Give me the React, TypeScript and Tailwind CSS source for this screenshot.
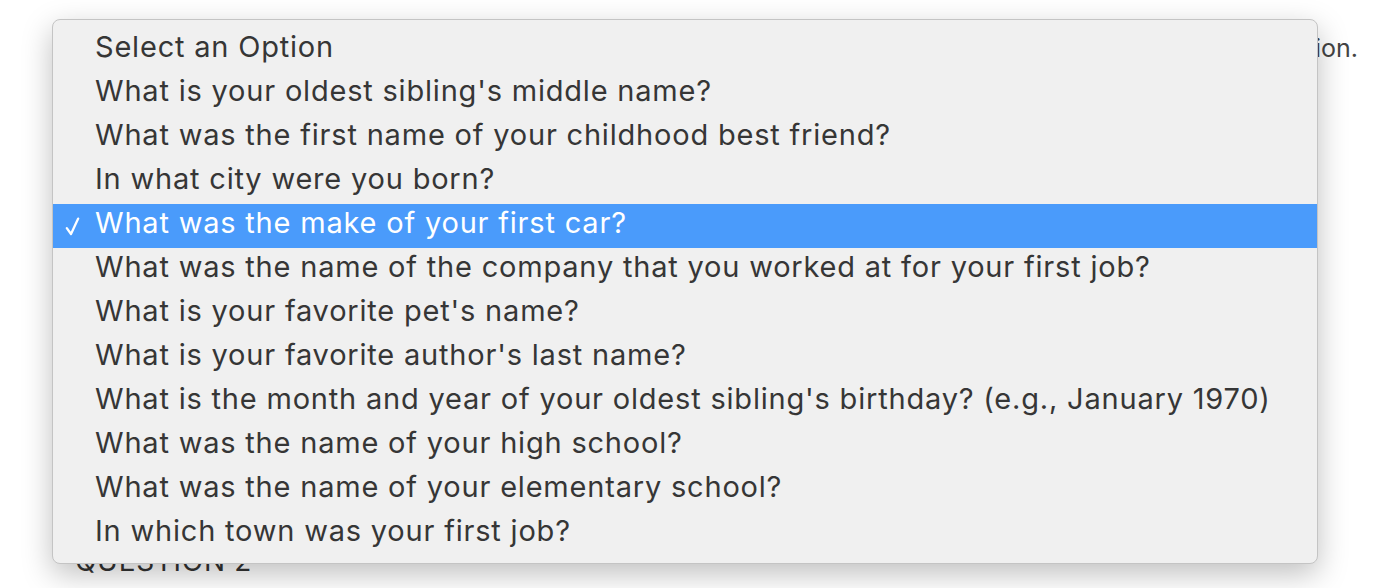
const OPTIONS = [
  "Select an Option",
  "What is your oldest sibling's middle name?",
  "What was the first name of your childhood best friend?",
  "In what city were you born?",
  "What was the make of your first car?",
  "What was the name of the company that you worked at for your first job?",
  "What is your favorite pet's name?",
  "What is your favorite author's last name?",
  "What is the month and year of your oldest sibling's birthday? (e.g., January 1970)",
  "What was the name of your high school?",
  "What was the name of your elementary school?",
  "In which town was your first job?",
];

const SELECTED = 4;

function Check() {
  return (
    <svg width="15" height="19" viewBox="0 0 15 19" fill="none" aria-hidden>
      <path d="M1.8 11.2 L6 17 L13.2 1.6" stroke="currentColor" strokeWidth="2.3" strokeLinecap="round" strokeLinejoin="round" />
    </svg>
  );
}

export default function App() {
  return (
    <div className="relative h-[588px] w-[1374px] overflow-hidden bg-white font-['Inter','Liberation_Sans',sans-serif]">
      {/* page behind the popup */}
      <div className="flex flex-col pl-[75px] pt-[30px]">
        <p className="pr-[16px] text-right text-[25px] leading-[36px] text-[#444]">
          Please choose a security question.
        </p>
        <p className="mt-[478px] text-[28px] uppercase leading-[34px] tracking-wide text-[#333]">
          Question 2
        </p>
      </div>

      {/* native select popup */}
      <ul className="absolute left-[52px] top-[19px] w-[1266px] rounded-[8px] border border-[#c4c4c4] bg-[#f0f0f0] pb-[7px] pt-[8px] shadow-[0_10px_30px_rgba(0,0,0,0.25)]">
        {OPTIONS.map((opt, i) => {
          const active = i === SELECTED;
          return (
            <li
              key={opt}
              className={`flex h-[44px] items-center text-[29px] leading-none tracking-[0.8px] ${
                active ? "bg-[#4a9bfb] text-white" : "text-[#363636]"
              }`}
            >
              <span className="flex w-[42px] pl-[12px]">{active ? <Check /> : null}</span>
              <span className="whitespace-nowrap pb-[8px]">{opt}</span>
            </li>
          );
        })}
      </ul>
    </div>
  );
}
